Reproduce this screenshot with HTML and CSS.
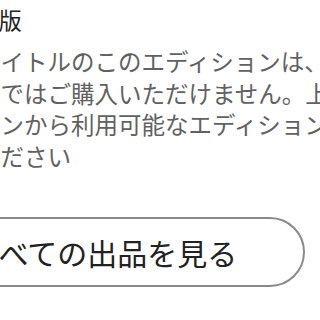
FILE: index.html
```html
<!DOCTYPE html>
<html lang="ja">
<head>
<meta charset="utf-8">
<link rel="stylesheet" href="styles.css">
</head>
<body>
<div class="panel">
  <h2 class="title">Kindle版</h2>
  <p class="notice">このタイトルのこのエディションは、<br>の地域ではご購入いただけません。上<br>のボタンから利用可能なエディションを<br>選択ください</p>
  <button class="all-offers">すべての出品を見る</button>
</div>
</body>
</html>
```

FILE: styles.css
```css
html, body {
  margin: 0;
  padding: 0;
  background: #ffffff;
  overflow: hidden;
  width: 320px;
  height: 320px;
}
.panel {
  margin-left: -70px;
  width: 500px;
  font-family: "Noto Sans CJK JP", "Noto Sans", sans-serif;
}
.title {
  margin: 0;
  padding-top: 4px;
  font-size: 23px;
  font-weight: 400;
  line-height: 30px;
  color: #222222;
}
.notice {
  margin: 12px 0 0;
  font-size: 23.5px;
  line-height: 31.5px;
  color: #616161;
  white-space: nowrap;
}
.all-offers {
  display: block;
  margin-top: 45px;
  margin-left: -27px;
  width: 402px;
  height: 70px;
  border: 2px solid #8a8a8a;
  border-radius: 35px;
  background: #ffffff;
  font-family: inherit;
  font-size: 30px;
  color: #222222;
  padding: 0;
}
```
